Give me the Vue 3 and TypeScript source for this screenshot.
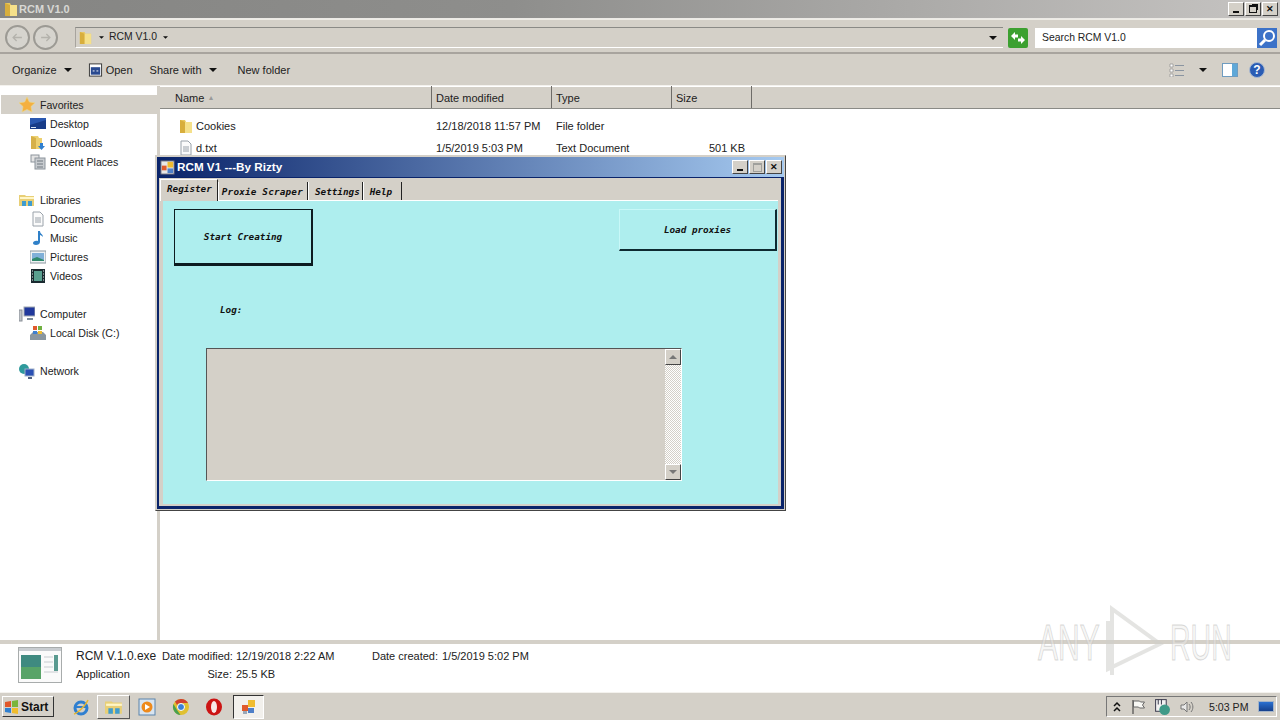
<script setup lang="ts">
interface NavItem { label: string; icon: string; child?: boolean; selected?: boolean; gap?: boolean }

const navItems: NavItem[] = [
  { label: 'Favorites', icon: 'star', selected: true },
  { label: 'Desktop', icon: 'desktop', child: true },
  { label: 'Downloads', icon: 'downloads', child: true },
  { label: 'Recent Places', icon: 'recent', child: true, gap: true },
  { label: 'Libraries', icon: 'library' },
  { label: 'Documents', icon: 'doc', child: true },
  { label: 'Music', icon: 'music', child: true },
  { label: 'Pictures', icon: 'pictures', child: true },
  { label: 'Videos', icon: 'videos', child: true, gap: true },
  { label: 'Computer', icon: 'computer' },
  { label: 'Local Disk (C:)', icon: 'disk', child: true, gap: true },
  { label: 'Network', icon: 'network' }
]

const columns = ['Name', 'Date modified', 'Type', 'Size']

const files = [
  { name: 'Cookies', icon: 'folder', date: '12/18/2018 11:57 PM', type: 'File folder', size: '' },
  { name: 'd.txt', icon: 'doc', date: '1/5/2019 5:03 PM', type: 'Text Document', size: '501 KB' }
]

const tabs = ['Register', 'Proxie Scraper', 'Settings', 'Help']
</script>

<template>
  <div class="desktop">
    <svg class="defs" width="0" height="0">
      <symbol id="i-folder" viewBox="0 0 16 16">
        <path d="M2 2h5l1 2h6v11H2z" fill="#e8c860" />
        <path d="M6 4h8v11H6z" fill="#f5e08a" />
        <path d="M2 2l5 2v11H2z" fill="#d8ae3c" />
      </symbol>
      <symbol id="i-star" viewBox="0 0 16 16">
        <path d="M8 0l2.400 5 5.600.8-4 3.800 1 5.400L8 12.500 3 15l1-5.400-4-3.800L5.600 5z" fill="#f4b040" stroke="#e8d890" stroke-width=".7" />
      </symbol>
      <symbol id="i-desktop" viewBox="0 0 16 16">
        <rect x="0" y="2" width="16" height="11" fill="#2a58b0" />
        <path d="M0 9l16-5v9H0z" fill="#183c88" />
        <rect x="1" y="11" width="5" height="1" fill="#d8e4f4" />
      </symbol>
      <symbol id="i-downloads" viewBox="0 0 16 16">
        <path d="M1 1h7l1 2h3v11H1z" fill="#ecd070" />
        <path d="M1 1l5 2v11H1z" fill="#d6b048" />
        <path d="M10 8h3v3h2l-3.500 4L8 11h2z" fill="#2f7fd0" />
      </symbol>
      <symbol id="i-recent" viewBox="0 0 16 16">
        <rect x="1" y="1" width="8" height="7" fill="#e4e4e4" stroke="#8c949c" />
        <rect x="5" y="4" width="10" height="11" fill="#c8ccd0" stroke="#8c949c" />
        <path d="M7 7h6M7 10h6M7 13h6" stroke="#707880" />
      </symbol>
      <symbol id="i-library" viewBox="0 0 16 16">
        <path d="M0 3h6l1 1h8v10H0z" fill="#e8cf76" />
        <path d="M1 5h14v2H1z" fill="#fff6c8" />
        <path d="M3 14V9h4v5zM9 14V9h4v5z" fill="#3f9ccf" />
      </symbol>
      <symbol id="i-doc" viewBox="0 0 16 16">
        <path d="M3 1h7l3 3v11H3z" fill="#fbfbfb" stroke="#9aa2aa" />
        <path d="M5 7h6M5 9h6M5 11h6" stroke="#9aa2aa" />
      </symbol>
      <symbol id="i-music" viewBox="0 0 16 16">
        <path d="M8 1h2c0 3 3 3 3 6-1-1-2-2-3-2v7c0 2-2 3-4 3s-3-1-3-2 2-3 5-2z" fill="#2f80c8" />
      </symbol>
      <symbol id="i-pictures" viewBox="0 0 16 16">
        <rect x="0" y="2" width="16" height="12" fill="#eef2f4" stroke="#8c98a0" />
        <rect x="2" y="4" width="12" height="8" fill="#80b0d8" />
        <path d="M2 10l5-2 7 3v1H2z" fill="#2f8a6c" />
      </symbol>
      <symbol id="i-videos" viewBox="0 0 16 16">
        <rect x="1" y="1" width="14" height="14" fill="#1a2a30" />
        <rect x="4" y="3" width="8" height="10" fill="#5aa090" />
        <path d="M2 3h1M2 6h1M2 9h1M2 12h1M13 3h1M13 6h1M13 9h1M13 12h1" stroke="#e0e8e8" />
      </symbol>
      <symbol id="i-computer" viewBox="0 0 16 16">
        <rect x="5" y="1" width="11" height="9" fill="#20389c" stroke="#a0a8b0" />
        <rect x="0" y="4" width="3" height="11" fill="#c0c4c8" stroke="#8a9098" />
        <path d="M8 12h6v2H8z" fill="#7a8a9a" />
      </symbol>
      <symbol id="i-disk" viewBox="0 0 16 16">
        <path d="M0 10l3-3h10l3 3v5H0z" fill="#8a96a0" />
        <rect x="3" y="1" width="4" height="4" fill="#e05a2c" />
        <rect x="8" y="1" width="4" height="4" fill="#70b040" />
        <rect x="3" y="6" width="4" height="3" fill="#3f80d0" />
        <rect x="8" y="6" width="4" height="3" fill="#eebc30" />
      </symbol>
      <symbol id="i-network" viewBox="0 0 16 16">
        <circle cx="5" cy="6" r="5" fill="#2f9a9c" />
        <rect x="6" y="6" width="9" height="7" fill="#2a50b4" stroke="#a0b0c8" />
        <path d="M9 15h4" stroke="#506080" stroke-width="2" />
      </symbol>
      <symbol id="i-caret" viewBox="0 0 8 4"><path d="M0 0h8L4 4z" fill="#111" /></symbol>
    </svg>

    <div class="explorer">
      <header class="title-bar">
        <svg class="title-icon"><use href="#i-folder" /></svg>
        <span class="title-text">RCM V1.0</span>
        <div class="win-buttons">
          <span class="win-btn"><i class="glyph-min"></i></span>
          <span class="win-btn"><i class="glyph-restore"></i></span>
          <span class="win-btn glyph-x">✕</span>
        </div>
      </header>

      <div class="address-row">
        <div class="nav-round"><svg viewBox="0 0 24 24"><path d="M17 12H7m4-4l-4 4 4 4" fill="none" stroke="#b4b2ac" stroke-width="1.500" /></svg></div>
        <div class="nav-round"><svg viewBox="0 0 24 24"><path d="M7 12h10m-4-4l4 4-4 4" fill="none" stroke="#b4b2ac" stroke-width="1.500" /></svg></div>
        <div class="address-box">
          <svg class="addr-folder"><use href="#i-folder" /></svg>
          <svg class="caret small"><use href="#i-caret" /></svg>
          <span>RCM V1.0</span>
          <svg class="caret small"><use href="#i-caret" /></svg>
          <svg class="caret addr-drop"><use href="#i-caret" /></svg>
        </div>
        <div class="refresh">
          <svg viewBox="0 0 20 20" width="20" height="20">
            <rect width="20" height="20" rx="2" fill="#3ca030" />
            <path d="M3 8l4-4v2.500h3v3H7V12zM17 12l-4 4v-2.500h-3v-3h3V8z" fill="#fff" />
          </svg>
        </div>
        <div class="search-box">
          <span>Search RCM V1.0</span>
          <span class="search-btn">
            <svg viewBox="0 0 20 20" width="20" height="20">
              <circle cx="12" cy="8" r="5" fill="none" stroke="#fff" stroke-width="2" />
              <path d="M8 12l-5 5" stroke="#fff" stroke-width="3" />
            </svg>
          </span>
        </div>
      </div>

      <div class="toolbar">
        <span class="tool">Organize<svg class="caret"><use href="#i-caret" /></svg></span>
        <span class="tool open">
          <svg class="open-icon" viewBox="0 0 16 16">
            <rect x="1.500" y="1.500" width="13" height="13" fill="#fff" stroke="#333" />
            <rect x="3" y="5" width="10" height="8" fill="#2a4a90" />
            <path d="M5 9h2M9 9h2" stroke="#fff" />
          </svg>
          Open
        </span>
        <span class="tool share">Share with<svg class="caret"><use href="#i-caret" /></svg></span>
        <span class="tool folder">New folder</span>
        <div class="tool-right">
          <svg class="views" viewBox="0 0 16 14">
            <path d="M1 1h3v3H1zM1 6h3v3H1zM1 11h3v3H1z" fill="#fff" stroke="#8c8c8c" stroke-width=".7" />
            <path d="M6 2.500h9M6 7.500h9M6 12.500h9" stroke="#8a94a0" />
          </svg>
          <svg class="caret"><use href="#i-caret" /></svg>
          <svg class="pane" viewBox="0 0 16 14">
            <rect x=".5" y=".5" width="15" height="13" fill="#fff" stroke="#6f9cc0" />
            <rect x="10" y="1" width="5" height="12" fill="#5fa8d8" />
          </svg>
          <svg class="help" viewBox="0 0 16 16">
            <circle cx="8" cy="8" r="7.500" fill="#2a5cb4" stroke="#a8b8d0" />
            <text x="8" y="12" text-anchor="middle" class="help-q">?</text>
          </svg>
        </div>
      </div>

      <div class="main">
        <nav class="sidebar">
          <div
            v-for="item in navItems"
            :key="item.label"
            class="nav-row"
            :class="{ child: item.child, selected: item.selected, gap: item.gap }"
          >
            <svg class="nav-icon"><use :href="'#i-' + item.icon" /></svg>
            <span>{{ item.label }}</span>
          </div>
        </nav>
        <section class="files">
          <div class="list-head">
            <span v-for="col in columns" :key="col" class="head-cell">
              {{ col }}<i v-if="col === 'Name'" class="sort">▴</i>
            </span>
            <span class="head-fill"></span>
          </div>
          <div v-for="file in files" :key="file.name" class="file-row">
            <span class="file-name"><svg class="nav-icon"><use :href="'#i-' + file.icon" /></svg>{{ file.name }}</span>
            <span>{{ file.date }}</span>
            <span>{{ file.type }}</span>
            <span class="file-size">{{ file.size }}</span>
          </div>
        </section>
      </div>

      <footer class="details">
        <svg class="details-icon" viewBox="0 0 44 36">
          <rect x=".5" y=".5" width="43" height="35" fill="#fafafa" stroke="#a8acac" />
          <rect x="1" y="1" width="42" height="3" fill="#c8ccd0" />
          <rect x="3" y="8" width="20" height="24" fill="#3f8a80" />
          <rect x="3" y="20" width="20" height="12" fill="#58a468" />
          <path d="M26 10h9M26 15h9M26 20h9M26 25h14" stroke="#c8ccd0" />
          <rect x="36" y="8" width="4" height="16" fill="#5a9a90" />
        </svg>
        <div class="details-name">
          <span class="exe">RCM V.1.0.exe</span>
          <span>Application</span>
        </div>
        <div class="details-meta">
          <span class="meta-key">Date modified:</span><span class="meta-val">12/19/2018 2:22 AM</span>
          <span class="meta-key">Size:</span><span class="meta-val">25.5 KB</span>
        </div>
        <div class="details-created">
          <span class="meta-key">Date created:</span><span class="meta-val">1/5/2019 5:02 PM</span>
        </div>
      </footer>

      <div class="taskbar">
        <button class="start">
          <svg viewBox="0 0 16 16" width="16" height="16">
            <path d="M1 3l6-1v6H1z" fill="#e0572a" />
            <path d="M8 2l6-1v7H8z" fill="#7ab53c" />
            <path d="M1 9h6v5l-6-1z" fill="#2f80d0" />
            <path d="M8 9h6v6l-6-1z" fill="#f0bc2c" />
          </svg>
          Start
        </button>
        <div class="task-items">
          <span class="task-slot">
            <svg viewBox="0 0 18 18" width="18" height="18">
              <circle cx="9" cy="10" r="6" fill="none" stroke="#2f7fd0" stroke-width="3" />
              <path d="M4 9h10" stroke="#2f7fd0" stroke-width="2" />
              <path d="M2 16C6 15 14 7 16 2" fill="none" stroke="#e8b830" stroke-width="1.500" />
            </svg>
          </span>
          <span class="task-slot raised"><svg width="18" height="18"><use href="#i-library" /></svg></span>
          <span class="task-slot">
            <svg viewBox="0 0 18 18" width="18" height="18">
              <rect x="1" y="1" width="16" height="16" fill="#d8e4f0" stroke="#5a84ac" />
              <circle cx="9" cy="9" r="5.500" fill="#ee8a1c" />
              <path d="M7 6l5 3-5 3z" fill="#fff" />
            </svg>
          </span>
          <span class="task-slot">
            <svg viewBox="0 0 18 18" width="18" height="18">
              <circle cx="9" cy="9" r="8" fill="#e0c030" />
              <path d="M9 1a8 8 0 0 1 7 4H9a4 4 0 0 0-4 2L3 3.500A8 8 0 0 1 9 1z" fill="#d04030" />
              <path d="M1.500 6L5 12l3.500 5A8 8 0 0 1 1.500 6z" fill="#48a050" />
              <circle cx="9" cy="9" r="3.500" fill="#3a80d8" stroke="#fff" />
            </svg>
          </span>
          <span class="task-slot">
            <svg viewBox="0 0 18 18" width="18" height="18">
              <ellipse cx="9" cy="9" rx="8" ry="8.500" fill="#cc1414" />
              <ellipse cx="9" cy="9" rx="3" ry="6" fill="#f8e8e8" />
            </svg>
          </span>
          <span class="task-slot active">
            <svg viewBox="0 0 16 16" width="16" height="16">
              <rect x="1" y="6" width="6" height="6" fill="#e05a2c" />
              <rect x="7" y="1" width="7" height="7" fill="#f0bc30" />
              <rect x="7" y="9" width="6" height="5" fill="#5080c8" />
              <rect x="2" y="12" width="4" height="3" fill="#9aa8b8" />
            </svg>
          </span>
        </div>
        <div class="tray">
          <svg viewBox="0 0 10 12" width="10" height="12">
            <path d="M2 5l3-3 3 3M2 10l3-3 3 3" fill="none" stroke="#111" stroke-width="1.500" />
          </svg>
          <svg viewBox="0 0 16 16" width="16" height="16">
            <path d="M3 1v14" stroke="#333" />
            <path d="M3.500 2h6l1 1h4l-2 3 2 3h-5l-1-1h-5z" fill="#f8f8f4" stroke="#666" />
          </svg>
          <svg viewBox="0 0 16 16" width="17" height="17">
            <rect x="1.500" y="1.500" width="10" height="11" fill="#f2f2f2" stroke="#445" />
            <path d="M4 1v5M7 1v5" stroke="#445" />
            <circle cx="10" cy="11" r="5" fill="#3f9a88" />
          </svg>
          <svg viewBox="0 0 16 16" width="16" height="16">
            <path d="M2 6h3l3-3v10l-3-3H2z" fill="#e8e8e8" stroke="#777" />
            <path d="M10 5c1.500 2 1.500 4 0 6M12 3c2.500 3 2.500 7 0 10" fill="none" stroke="#777" />
          </svg>
          <span class="clock">5:03 PM</span>
          <span class="show-desktop"></span>
        </div>
      </div>
    </div>

    <!-- the running app window, floating over explorer -->
    <div class="app-window">
      <div class="app-title">
        <svg viewBox="0 0 16 16" width="15" height="15">
          <rect x="1" y="1" width="14" height="14" fill="#e8e8e8" stroke="#667" />
          <rect x="2" y="6" width="5" height="5" fill="#e05a2c" />
          <rect x="8" y="2" width="6" height="6" fill="#f0bc30" />
          <rect x="8" y="9" width="6" height="5" fill="#5080c8" />
        </svg>
        <span class="app-title-text">RCM V1 ---By Rizty</span>
        <div class="app-buttons">
          <span class="win-btn"><i class="glyph-min"></i></span>
          <span class="win-btn disabled"><i class="glyph-max"></i></span>
          <span class="win-btn glyph-x">✕</span>
        </div>
      </div>
      <div class="app-body">
        <div class="tab-strip">
          <span
            v-for="(tab, i) in tabs"
            :key="tab"
            class="tab"
            :class="{ current: i === 0 }"
          >{{ tab }}</span>
        </div>
        <div class="panel">
          <div class="panel-top">
            <button class="action start-creating">Start Creating</button>
            <button class="action load-proxies">Load proxies</button>
          </div>
          <div class="log-label">Log:</div>
          <div class="log-box">
            <div class="scroll">
              <span class="scroll-btn"><i class="arrow-up"></i></span>
              <span class="scroll-btn"><i class="arrow-down"></i></span>
            </div>
          </div>
        </div>
      </div>
    </div>

    <svg class="watermark" viewBox="0 0 200 80" width="200" height="80">
      <text transform="translate(2 57) scale(.6 1)" class="wm-text">ANY</text>
      <path d="M72 18v48l52-25L76 6v66" class="wm-play" />
      <text transform="translate(134 57) scale(.57 1)" class="wm-text">RUN</text>
    </svg>
  </div>
</template>

<style>
html, body { margin: 0; padding: 0; }
</style>

<style scoped>
.desktop {
  position: relative;
  width: 1280px;
  height: 720px;
  overflow: hidden;
  font-family: "Liberation Sans", Arial, sans-serif;
  font-size: 11px;
  color: #1a1a1a;
  background: #fff;
}

.defs { position: absolute; }

.explorer {
  display: flex;
  flex-direction: column;
  height: 720px;
}

.title-bar {
  height: 18px;
  display: flex;
  align-items: center;
  padding: 0 2px 0 3px;
  background: linear-gradient(90deg, #858583, #8e8e8c 40%, #c6c4c2);
  border-bottom: 1px solid #eceae6;
}

.title-icon { width: 16px; height: 16px; }

.title-text {
  color: #d8d8d4;
  font-weight: bold;
  font-size: 11px;
}

.win-buttons {
  margin-left: auto;
  display: flex;
  gap: 1px;
}

.win-btn {
  width: 16px;
  height: 14px;
  box-sizing: border-box;
  display: flex;
  align-items: center;
  justify-content: center;
  background: #d4d0c8;
  border: 1px solid;
  border-color: #fff #444 #444 #fff;
  color: #111;
  font-size: 9px;
  font-weight: bold;
  line-height: 1;
}

.glyph-min {
  display: block;
  width: 6px;
  height: 2px;
  margin-top: 6px;
  background: #111;
}

.glyph-restore {
  display: block;
  width: 6px;
  height: 5px;
  box-sizing: content-box;
  border: 1px solid #111;
  border-top-width: 2px;
  box-shadow: 2px -2px 0 -1px #111;
}

.glyph-max {
  display: block;
  width: 7px;
  height: 6px;
  border: 1px solid #a0a09c;
  border-top-width: 2px;
}

.address-row {
  height: 35px;
  box-sizing: border-box;
  display: flex;
  align-items: center;
  padding: 4px 0 0 5px;
  background: #d4d0c8;
  border-bottom: 2px solid #a8a49e;
  box-shadow: inset 0 1px 0 #eeece6;
}

.nav-round {
  width: 25px;
  height: 25px;
  border-radius: 50%;
  box-sizing: border-box;
  border: 2px solid #9c9a94;
  background: #d6d4ce;
  margin-right: 3px;
}

.nav-round svg { display: block; width: 21px; height: 21px; }

.address-box {
  margin-left: 14px;
  width: 928px;
  height: 21px;
  box-sizing: border-box;
  display: flex;
  align-items: center;
  border-top: 1px solid #8a8a86;
  border-left: 1px solid #a8a49e;
  border-bottom: 1px solid #fff;
  position: relative;
  padding-left: 2px;
  color: #222;
  font-size: 10.400px;
}

.addr-folder { width: 15px; height: 17px; margin-right: 6px; }

.address-box span { margin: -2px 6px 0 5px; }

.caret { width: 8px; height: 4px; }
.caret.small { width: 5px; height: 3px; }

.addr-drop { position: absolute; right: 6px; top: 8px; }

.refresh { width: 20px; height: 20px; margin: 0 7px 0 5px; }

.search-box {
  flex: 1;
  height: 20px;
  display: flex;
  align-items: center;
  justify-content: space-between;
  background: #fff;
  padding-left: 7px;
  margin-right: 3px;
  color: #222;
  font-size: 10.400px;
}

.search-btn {
  width: 20px;
  height: 20px;
  background: #3c72c8;
}

.toolbar {
  height: 31px;
  display: flex;
  align-items: center;
  padding: 0 15px 0 12px;
  background: #d4d0c8;
  border-bottom: 1px solid #f4f2ee;
  color: #222;
}

.tool { display: flex; align-items: center; white-space: nowrap; }
.tool .caret { margin-left: 7px; }
.open { margin-left: 16px; }
.open-icon { width: 15px; height: 16px; margin-right: 3px; }
.share { margin-left: 17px; }
.folder { margin-left: 21px; }

.tool-right {
  margin-left: auto;
  display: flex;
  align-items: center;
}

.views { width: 16px; height: 14px; margin-right: 14px; }
.pane { width: 16px; height: 14px; margin: 0 11px 0 15px; }
.help { width: 16px; height: 16px; }
.help-q { fill: #fff; font-size: 12px; font-weight: bold; }

.main {
  flex: 1;
  display: flex;
  min-height: 0;
}

.sidebar {
  width: 160px;
  flex: none;
  box-sizing: border-box;
  padding: 9px 0 0 1px;
  border-right: 3px solid #d4d0c8;
  font-size: 10.600px;
}

.nav-row {
  height: 19px;
  display: flex;
  align-items: center;
  padding-left: 18px;
  color: #222;
}

.nav-row.child { padding-left: 29px; }
.nav-row.selected { background: #d4d0c8; }
.nav-row.gap { margin-bottom: 19px; }
.nav-icon { width: 16px; height: 16px; margin-right: 4px; flex: none; }
.nav-row:not(.child) .nav-icon { margin-right: 5px; }

.files { flex: 1; }

.list-head {
  display: grid;
  grid-template-columns: 272px 120px 120px 80px 1fr;
  background: #d4d0c8;
  border-bottom: 1px solid #8a8a86;
  box-shadow: inset 0 1px 0 #fff;
  box-sizing: border-box;
  height: 23px;
}

.head-cell {
  display: flex;
  align-items: center;
  padding: 1px 0 0 15px;
  border-right: 1px solid #6e6c68;
  color: #222;
}

.head-cell:not(:first-child) { padding-left: 4px; }

.sort { font-style: normal; color: #999; margin-left: 5px; font-size: 8px; }

.file-row {
  display: grid;
  grid-template-columns: 272px 120px 120px 73px;
  height: 22px;
  align-items: center;
  color: #222;
}

.file-row > span { padding-left: 4px; }

.file-row > .file-name {
  display: flex;
  align-items: center;
  padding-left: 18px;
}

.file-name .nav-icon { margin-right: 2px; }

.file-row > .file-size { text-align: right; padding: 0; }

.list-head + .file-row { margin-top: 6px; }

.details {
  height: 52px;
  box-sizing: border-box;
  display: flex;
  align-items: flex-start;
  border-top: 4px solid #d4d0c8;
  padding: 3px 0 0 18px;
  background: #fff;
  color: #222;
}

.details-icon { width: 44px; height: 36px; flex: none; }

.details-name {
  display: flex;
  flex-direction: column;
  margin-left: 14px;
  width: 86px;
  line-height: 18px;
  white-space: nowrap;
}

.exe { font-size: 12px; }

.details-meta {
  display: grid;
  grid-template-columns: 70px auto;
  column-gap: 4px;
  line-height: 18px;
  width: 208px;
}

.details-created {
  display: grid;
  grid-template-columns: 68px auto;
  column-gap: 4px;
  line-height: 18px;
}

.meta-key { text-align: right; white-space: nowrap; }
.meta-val { white-space: nowrap; }

.taskbar {
  height: 28px;
  box-sizing: border-box;
  display: flex;
  align-items: center;
  background: #d4d0c8;
  border-top: 1px solid #f4f2ee;
  padding-left: 2px;
}

.start {
  width: 52px;
  height: 21px;
  padding: 0 0 0 1px;
  display: flex;
  align-items: center;
  gap: 1px;
  background: #d4d0c8;
  border: 1px solid;
  border-color: #fff #333 #333 #fff;
  font-family: inherit;
  font-size: 12px;
  font-weight: bold;
  color: #111;
}

.task-items {
  display: flex;
  margin-left: 10px;
}

.task-slot {
  height: 24px;
  width: 33px;
  display: flex;
  align-items: center;
  justify-content: center;
  box-sizing: border-box;
}

.task-slot:nth-child(4) { margin-left: 1px; }

.task-slot.raised {
  border: 1px solid;
  border-color: #fff #555 #555 #fff;
}

.task-slot.active {
  margin-left: 3px;
  width: 31px;
  background: #f2f0ec;
  border: 1px solid;
  border-color: #333 #fff #fff #333;
}

.tray {
  margin-left: auto;
  margin-right: 3px;
  width: 171px;
  height: 21px;
  box-sizing: border-box;
  display: flex;
  align-items: center;
  gap: 8px;
  padding-left: 5px;
  border: 1px solid;
  border-color: #777 #fff #fff #777;
}

.clock { margin-left: 6px; color: #222; white-space: nowrap; font-size: 10.600px; }

.show-desktop {
  width: 16px;
  height: 11px;
  box-sizing: border-box;
  margin-left: 2px;
  background: linear-gradient(#2a70d0, #16408c);
  border: 1px solid #a4b4c8;
}

.app-window {
  position: absolute;
  left: 155px;
  top: 155px;
  width: 631px;
  height: 356px;
  box-sizing: border-box;
  display: flex;
  flex-direction: column;
  background: #d4d0c8;
  border: 1px solid #d4d0c8;
  border-right-color: #444;
  border-bottom-color: #444;
  padding: 1px;
}

.app-title {
  height: 20px;
  flex: none;
  box-sizing: border-box;
  display: flex;
  align-items: center;
  padding: 0 2px 0 3px;
  gap: 2px;
  background: linear-gradient(90deg, #0a246a, #a6caf0);
  color: #fff;
  font-weight: bold;
  font-size: 11.700px;
}

.app-title-text { margin-top: -2px; }

.app-buttons { margin-left: auto; display: flex; gap: 1px; }

.app-body {
  flex: 1;
  display: flex;
  flex-direction: column;
  min-height: 0;
  border: 2px solid #0a246a;
  border-top-width: 1px;
  border-right-width: 3px;
  border-bottom-width: 3px;
  background: #d4d0c8;
  padding: 0 3px 2px 4px;
}

.tab-strip {
  height: 22px;
  flex: none;
  display: flex;
  align-items: flex-end;
  margin-left: -3px;
  background: #d4d0c8;
  border-bottom: 1px solid #fff;
  font-family: "DejaVu Sans Mono", monospace;
  font-weight: bold;
  font-style: italic;
  font-size: 9.300px;
  color: #111;
}

.tab {
  height: 18px;
  display: flex;
  align-items: center;
  padding: 0 2px 0 6px;
  border-left: 1px solid #fff;
  border-right: 1px solid #222;
  box-sizing: border-box;
  white-space: nowrap;
}

.tab:nth-child(2) { padding: 0 4px 0 3px; letter-spacing: .2px; }
.tab:nth-child(4) { padding: 0 9px 0 6px; }

.tab.current {
  height: 22px;
  padding: 0 5px 4px 6px;
  margin-bottom: -1px;
  border-top: 1px solid #fff;
  background: #d4d0c8;
}

.panel {
  flex: 1;
  background: #aeeeee;
  padding: 8px 1px 0 11px;
  font-family: "DejaVu Sans Mono", monospace;
  font-weight: bold;
  font-style: italic;
  font-size: 9.300px;
  color: #111;
}

.panel-top {
  display: flex;
  justify-content: space-between;
  align-items: flex-start;
}

.action {
  padding: 0;
  font: inherit;
  color: inherit;
  background: #aeeeee;
  box-sizing: border-box;
}

.start-creating {
  width: 139px;
  height: 57px;
  border: 1px solid #0d1b20;
  border-right-width: 2px;
  border-bottom-width: 3px;
}

.load-proxies {
  width: 158px;
  height: 42px;
  border: 1px solid #c8f8f8;
  border-right: 2px solid #0d2a30;
  border-bottom: 2px solid #0d2a30;
}

.log-label { margin: 38px 0 0 46px; height: 12px; line-height: 12px; }

.log-box {
  margin: 32px 0 0 32px;
  width: 476px;
  height: 133px;
  box-sizing: border-box;
  display: flex;
  justify-content: flex-end;
  background: #d4d0c8;
  border: 1px solid;
  border-color: #555 #fff #fff #555;
}

.scroll {
  width: 16px;
  display: flex;
  flex-direction: column;
  justify-content: space-between;
  background: repeating-conic-gradient(#fff 0 25%, #d4d0c8 0 50%) 0 0 / 2px 2px;
}

.scroll-btn {
  height: 16px;
  box-sizing: border-box;
  display: flex;
  align-items: center;
  justify-content: center;
  background: #d4d0c8;
  border: 1px solid;
  border-color: #fff #444 #444 #fff;
}

.arrow-up {
  border-left: 4px solid transparent;
  border-right: 4px solid transparent;
  border-bottom: 4px solid #777;
}

.arrow-down {
  border-left: 4px solid transparent;
  border-right: 4px solid transparent;
  border-top: 4px solid #777;
}

.watermark {
  position: absolute;
  left: 1036px;
  top: 603px;
  pointer-events: none;
}

.wm-text {
  font-family: "Liberation Sans", sans-serif;
  font-size: 50px;
  fill: rgba(235, 235, 233, .45);
  stroke: rgba(185, 185, 183, .55);
  stroke-width: 1;
}

.wm-play {
  fill: none;
  stroke: rgba(205, 205, 203, .55);
  stroke-width: 4;
}
</style>
